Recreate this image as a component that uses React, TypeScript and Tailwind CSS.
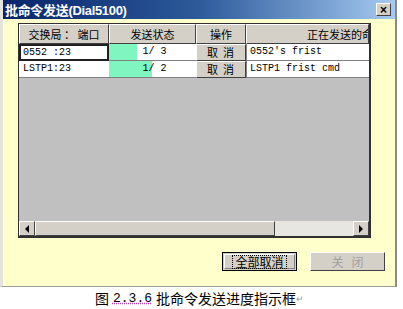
import React from 'react';

const cjk = "font-['SimSun','Noto_Sans_CJK_SC',sans-serif]";
const mono = "font-['Liberation_Mono',monospace]";

const rows = [
  { port: '0552 :23', done: 1, total: 3, cmd: "0552's frist", focus: true },
  { port: 'LSTP1:23', done: 1, total: 2, cmd: 'LSTP1 frist cmd', focus: false },
];

const Bevel = ({ className = '', children }: { className?: string; children?: React.ReactNode }) => (
  <div
    className={`flex items-center justify-center bg-[#d4d0c8] border border-t-white border-l-white border-r-[#404040] border-b-[#404040] ${className}`}
  >
    {children}
  </div>
);

export default function App() {
  return (
    <div className={`w-[403px] h-[309px] bg-white flex flex-col ${cjk}`}>
      {/* Dialog */}
      <div className="w-[397px] h-[287px] flex flex-col bg-[#ffffcc] border-l-[3px] border-l-[#e4e4dc] border-r-2 border-r-[#8a8a8a] border-b border-b-[#9a9a9a]">
        {/* Title bar */}
        <div className="h-[19px] flex items-center justify-between pl-[2px] pr-[4px] bg-gradient-to-r from-[#0a246a] via-[#2d5a9a] to-[#a6caf0]">
          <span className="text-white font-bold text-[13px] leading-none tracking-tight">
            批命令发送<span className="font-['Liberation_Sans',sans-serif]">(Dial5100)</span>
          </span>
          <Bevel className="w-[15px] h-[13px] text-[12px] leading-none font-bold font-['Liberation_Sans',sans-serif]">
            ×
          </Bevel>
        </div>

        {/* Body */}
        <div className="flex-1 flex flex-col pl-[15px] pt-[4px]">
          {/* Grid */}
          <div className="w-[353px] h-[215px] flex flex-col bg-[#c0c0c0] border border-[#303030] border-r-2 border-b-2">
            {/* Header */}
            <div className="h-[20px] flex text-[11px] leading-none">
              <Bevel className="w-[90px] whitespace-pre">交换局 ： 端口</Bevel>
              <Bevel className="w-[87px]">发送状态</Bevel>
              <Bevel className="w-[50px]">操作</Bevel>
              <Bevel className="flex-1 justify-start pl-[60px] overflow-hidden whitespace-nowrap">正在发送的命令</Bevel>
            </div>
            {rows.map((r) => (
              <div key={r.port} className={`h-[17px] flex text-[10px] leading-none ${mono}`}>
                <div
                  className={`w-[90px] flex items-center pl-[2px] bg-white ${
                    r.focus ? 'border-2 border-[#202020]' : 'border-b border-[#808080] pl-[4px]'
                  }`}
                >
                  {r.port}
                </div>
                <div className="w-[87px] relative bg-white border-b border-[#808080]">
                  <div
                    className="absolute left-0 top-0 bottom-0 bg-[#80f5c0]"
                    style={{ width: `${(r.done / r.total) * 87 - 1}px` }}
                  />
                  <span className="absolute inset-0 flex items-center justify-center pl-[4px]">
                    {r.done}/ {r.total}
                  </span>
                </div>
                <Bevel className={`w-[50px] text-[11px] ${cjk} tracking-[5px] pl-[4px]`}>取消</Bevel>
                <div className="flex-1 flex items-center pl-[3px] bg-white border-l border-b border-[#808080] whitespace-nowrap">
                  {r.cmd}
                </div>
              </div>
            ))}
            <div className="flex-1" />
            {/* Scrollbar */}
            <div className="h-[15px] flex bg-[#e8e6e0]">
              <Bevel className="w-[16px]">
                <svg width="6" height="8" viewBox="0 0 6 8">
                  <path d="M5 0 L1 4 L5 8 Z" fill="#000" />
                </svg>
              </Bevel>
              <Bevel className="w-[240px]" />
              <div className="flex-1" />
              <Bevel className="w-[16px]">
                <svg width="6" height="8" viewBox="0 0 6 8">
                  <path d="M1 0 L5 4 L1 8 Z" fill="#000" />
                </svg>
              </Bevel>
            </div>
          </div>

          {/* Buttons */}
          <div className="flex justify-end gap-[13px] mt-[14px] pr-[10px]">
            <div className="w-[75px] h-[19px] border border-black bg-[#d4d0c8] p-[1px]">
              <div className="w-full h-full flex items-center justify-center border border-t-white border-l-white border-r-[#808080] border-b-[#808080]">
                <span className="text-[12px] leading-none px-[2px] border border-dotted border-black">全部取消</span>
              </div>
            </div>
            <Bevel className="w-[75px] h-[19px] text-[12px] text-[#a0a0a0] tracking-[8px] pl-[8px]">关闭</Bevel>
          </div>
        </div>
      </div>

      {/* Caption */}
      <div className="flex-1 flex items-center justify-center text-[14px] leading-none text-black pr-[4px]">
        <span>图 </span>
        <span className={`${mono} text-[13px] underline decoration-dotted decoration-[#c040c0] mx-[4px]`}>2.3.6</span>
        <span>批命令发送进度指示框</span>
        <span className="text-[9px] text-[#a0a0a0]">↵</span>
      </div>
    </div>
  );
}
